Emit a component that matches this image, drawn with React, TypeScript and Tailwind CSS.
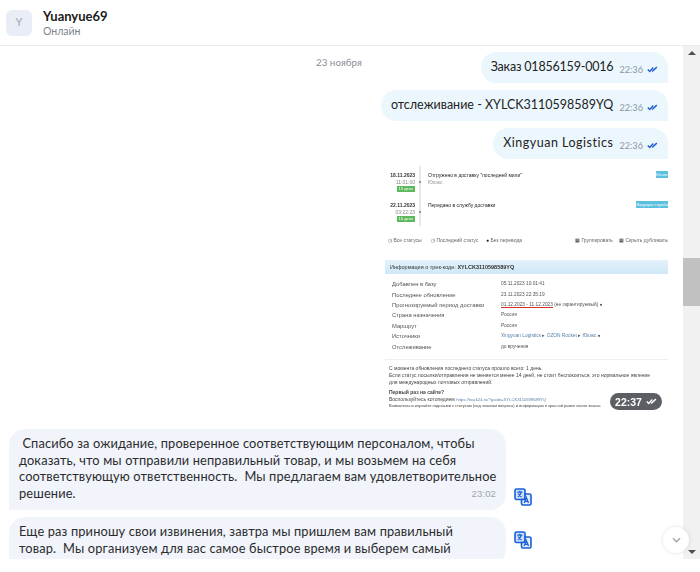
const Ticks = ({ className }: { className: string }) => (
  <svg viewBox="0 0 14 8" className={className} fill="none" stroke="currentColor" strokeWidth="1.8">
    <path d="M1 4l2.5 2.5L8 1.5" />
    <path d="M6.5 6.5L12.5 1" />
  </svg>
)

const TranslateIcon = () => (
  <svg viewBox="0 0 18 18" className="h-[18px] w-[18px] text-[#1a5fd6]" fill="none" stroke="currentColor" strokeWidth="1.6">
    <path d="M2.5 1h7A1.5 1.5 0 0 1 11 2.5V10a1.5 1.5 0 0 1-1.5 1.5h-7A1.5 1.5 0 0 1 1 10V2.5A1.5 1.5 0 0 1 2.5 1z" fill="#cfe0fa" />
    <path d="M3.2 4.2h5.2M5.8 2.8v1.4M3.8 9c1.8-1 3-2.6 3.6-4.8M4.2 5.6c.7 1.4 1.9 2.6 3.4 3.4" strokeWidth="1.2" />
    <path d="M11 6h4.5A1.5 1.5 0 0 1 17 7.5v8a1.5 1.5 0 0 1-1.5 1.5H9a1.5 1.5 0 0 1-1.5-1.5v-4h2A1.5 1.5 0 0 0 11 10z" fill="#e3edfc" />
    <path d="M10.2 15l2.1-5.4L14.5 15M11 13.3h2.7" strokeWidth="1.3" />
  </svg>
)

const OutBubble = ({ text, spacing }: { text: string; spacing: string }) => (
  <div className="flex h-[31px] items-center rounded-l-[16px] rounded-tr-[16px] bg-[#ecf7fd] pl-[10px] pr-[10px]">
    <span className={`text-[12.5px] text-[#222] ${spacing}`}>{text}</span>
    <span className="ml-[6px] mt-[4px] text-[9.2px] text-[#8b96a3]">22:36</span>
    <Ticks className="ml-[4px] mt-[4px] h-[7px] w-[11px] text-[#1d5fd0]" />
  </div>
)

const HistoryRow = ({ date, time, days, title, sub, tag, tagW }: { date: string; time: string; days: string; title: string; sub?: string; tag: string; tagW: string }) => (
  <div className="flex h-[30px]">
    <div className="flex w-[27px] flex-col items-end">
      <span className="font-bold text-[#333]">{date}</span>
      <span className="mt-[1px] text-[#888]">{time}</span>
      <span className="mt-[1px] bg-[#5cb85c] px-[2px] text-[4px] leading-[6px] text-white">{days}</span>
    </div>
    <div className="relative ml-[3px] w-[3px]">
      <div className="absolute left-[1px] top-[-6px] h-[30px] w-[2px] bg-[#e8e8e8]" />
      <div className="absolute left-[1px] top-[9px] h-[2px] w-[2px] bg-[#999]" />
    </div>
    <div className="ml-[7px] flex flex-col">
      <span className="text-[#222]">{title}</span>
      <span className="mt-[1px] text-[#999]">{sub}</span>
    </div>
    <span className={`ml-auto mt-[-1px] h-[7px] whitespace-nowrap bg-[#5bc0de] text-right text-[4px] leading-[7px] text-white ${tagW}`}>{tag}</span>
  </div>
)

const InfoRow = ({ label, children }: { label: string; children: React.ReactNode }) => (
  <div className="flex h-[10.4px] items-center text-[#555]">
    <span className="w-[109px] shrink-0 text-[5.8px]">{label}</span>
    <span className="text-[4.8px]">{children}</span>
  </div>
)

const TrackShot = () => (
  <div className="relative h-[245px] w-[283px] overflow-hidden bg-white pt-[6px] font-['Liberation_Sans',sans-serif] text-[5px] leading-[6px] blur-[0.4px]">
    <div className="pl-[3px]">
      <HistoryRow date="18.11.2023" time="11:01:00" days="13 день" title={'Отгружено в доставку "последней мили"'} sub="Юкэкс" tag="Юкэкс" tagW="w-[12px]" />
      <HistoryRow date="22.11.2023" time="03:22:23" days="16 день" title="Передано в службу доставки" tag="Ведущая служба" tagW="w-[32px]" />
    </div>
    <div className="mt-[5px] flex whitespace-nowrap pl-[3px] text-[#666]">
      <span className="w-[43px]">◷ Все статусы</span>
      <span className="w-[55px]">◷ Последний статус</span>
      <span><span className="text-[#222]">●</span> Без перевода</span>
      <span className="ml-auto w-[44px]"><span className="text-[#222]">▦</span> Группировать</span>
      <span className="w-[49px]"><span className="text-[#222]">▦</span> Скрыть дубликаты</span>
    </div>
    <div className="mt-[17px] flex h-[14px] items-center bg-gradient-to-b from-[#e4f2fb] to-[#cfe7f6] pl-[5px] text-[5.5px] text-[#333]">
      Информация о трек-коде:&nbsp;<b>XYLCK3110598589YQ</b>
    </div>
    <div className="pl-[7px] pt-[5px]">
      <InfoRow label="Добавлен в базу">05.11.2023 10:01:41</InfoRow>
      <InfoRow label="Последнее обновление">23.11.2023 22:35:19</InfoRow>
      <InfoRow label="Прогнозируемый период доставки">
        <span className="border-b border-[#d9302c]">01.12.2023 - 11.12.2023</span> (не гарантируемый) ●
      </InfoRow>
      <InfoRow label="Страна назначения">Россия</InfoRow>
      <InfoRow label="Маршрут">Россия</InfoRow>
      <InfoRow label="Источники">
        <span className="text-[#5b7fa8]">Xingyuan Logistics</span> ▸ <span className="text-[#5b7fa8]">OZON Rocket</span> ▸ <span className="text-[#5b7fa8]">Юкэкс</span> ●
      </InfoRow>
      <InfoRow label="Отслеживание">до вручения</InfoRow>
    </div>
    <div className="mt-[7px] border-t border-[#eee] pl-[4px] pr-[16px] pt-[5px] text-[#444]">
      <p className="leading-[7px]">С момента обновления последнего статуса прошло всего: 1 день.</p>
      <p className="leading-[7px]">Если статус посылки/отправления не меняется менее 14 дней, не стоит беспокоиться, это нормальное явление для международных почтовых отправлений.</p>
      <p className="mt-[3px] font-bold leading-[7px]">Первый раз на сайте?</p>
      <p className="leading-[7px]">Воспользуйтесь котопедием <span className="text-[4.2px] text-[#5b7fa8]">https://track24.ru/?guide=XYLCK3110598589YQ</span></p>
      <p className="whitespace-nowrap text-[4px] leading-[6px]">Внимательно изучайте подсказки к статусам (под значком вопроса) и информацию в красной рамке около значка</p>
    </div>
    <div className="absolute bottom-[1px] right-[6px] flex h-[17px] w-[52px] items-center justify-center gap-[4px] rounded-full bg-[#5b5e63] text-[10.5px] font-bold text-white">
      22:37
      <Ticks className="h-[7px] w-[11px] text-white" />
    </div>
  </div>
)

const InBubble = ({ children, time, iconGap }: { children: React.ReactNode; time?: string; iconGap: string }) => (
  <div className="flex items-end">
    <div className="relative w-[497px] whitespace-nowrap rounded-r-[16px] rounded-tl-[16px] bg-[#f1f4fb] pb-[9px] pl-[10px] pr-[2px] pt-[6px] text-[12.8px] leading-[16.5px] tracking-[0.15px] text-[#2b2b2b]">
      {children}
      {time && <span className="absolute bottom-[8px] right-[10px] font-['Liberation_Sans',sans-serif] text-[9.5px] text-[#a0a4aa]">{time}</span>}
    </div>
    <div className={`ml-[8px] ${iconGap}`}>
      <TranslateIcon />
    </div>
  </div>
)

export default function App() {
  return (
    <div className="h-[572px] w-[700px] overflow-hidden bg-white font-['Lato',sans-serif]">
      <header className="flex h-[46px] items-center border-b border-[#eaeaea] pl-[6px]">
        <div className="flex h-[26px] w-[26px] items-center justify-center rounded-[6px] bg-[#e9edf6] text-[11px] text-[#9ca6b8]">Y</div>
        <div className="ml-[11px]">
          <div className="text-[13px] font-bold leading-[16px] text-[#1b1b1b]">Yuanyue69</div>
          <div className="text-[10.5px] leading-[14px] text-[#7d858e]">Онлайн</div>
        </div>
      </header>

      <div className="relative flex h-[513px]">
        <main className="w-[683px] overflow-hidden">
          <div className="relative flex flex-col items-end gap-[7px] pr-[15px] pt-[6px]">
            <span className="absolute left-[316px] top-[9px] text-[9.8px] text-[#8b8f96]">23 ноября</span>
            <OutBubble text="Заказ 01856159-0016" spacing="tracking-[-0.2px]" />
            <OutBubble text="отслеживание - XYLCK3110598589YQ" spacing="tracking-normal" />
            <OutBubble text="Xingyuan Logistics" spacing="tracking-[0.5px]" />
            <TrackShot />
          </div>
          <div className="mt-[18px] flex flex-col gap-[7px] pl-[9px]">
            <InBubble time="23:02" iconGap="mb-[4px]">
              &nbsp;Спасибо за ожидание, проверенное соответствующим персоналом, чтобы<br />
              доказать, что мы отправили неправильный товар, и мы возьмем на себя<br />
              соответствующую ответственность.&nbsp; Мы предлагаем вам удовлетворительное<br />
              решение.
            </InBubble>
            <InBubble iconGap="mb-[16px]">
              Еще раз приношу свои извинения, завтра мы пришлем вам правильный<br />
              товар.&nbsp; Мы организуем для вас самое быстрое время и выберем самый
            </InBubble>
          </div>
        </main>

        <aside className="flex w-[17px] flex-col items-center justify-between bg-[#f1f1f1] py-[5px]">
          <div className="h-0 w-0 border-x-[4px] border-b-[4px] border-x-transparent border-b-[#505050]" />
          <div className="h-0 w-0 border-x-[4px] border-t-[4px] border-x-transparent border-t-[#505050]" />
          <div className="absolute right-0 top-[212px] h-[48px] w-[17px] bg-[#c1c1c1]" />
        </aside>

        <button className="absolute bottom-[6px] right-[11px] flex h-[26px] w-[26px] items-center justify-center rounded-full bg-white shadow-[0_0_4px_rgba(0,0,0,0.12)]">
          <svg viewBox="0 0 10 6" className="h-[6px] w-[9px] text-[#a3a7ad]" fill="none" stroke="currentColor" strokeWidth="1.6">
            <path d="M1 1l4 4 4-4" />
          </svg>
        </button>
      </div>
    </div>
  )
}
